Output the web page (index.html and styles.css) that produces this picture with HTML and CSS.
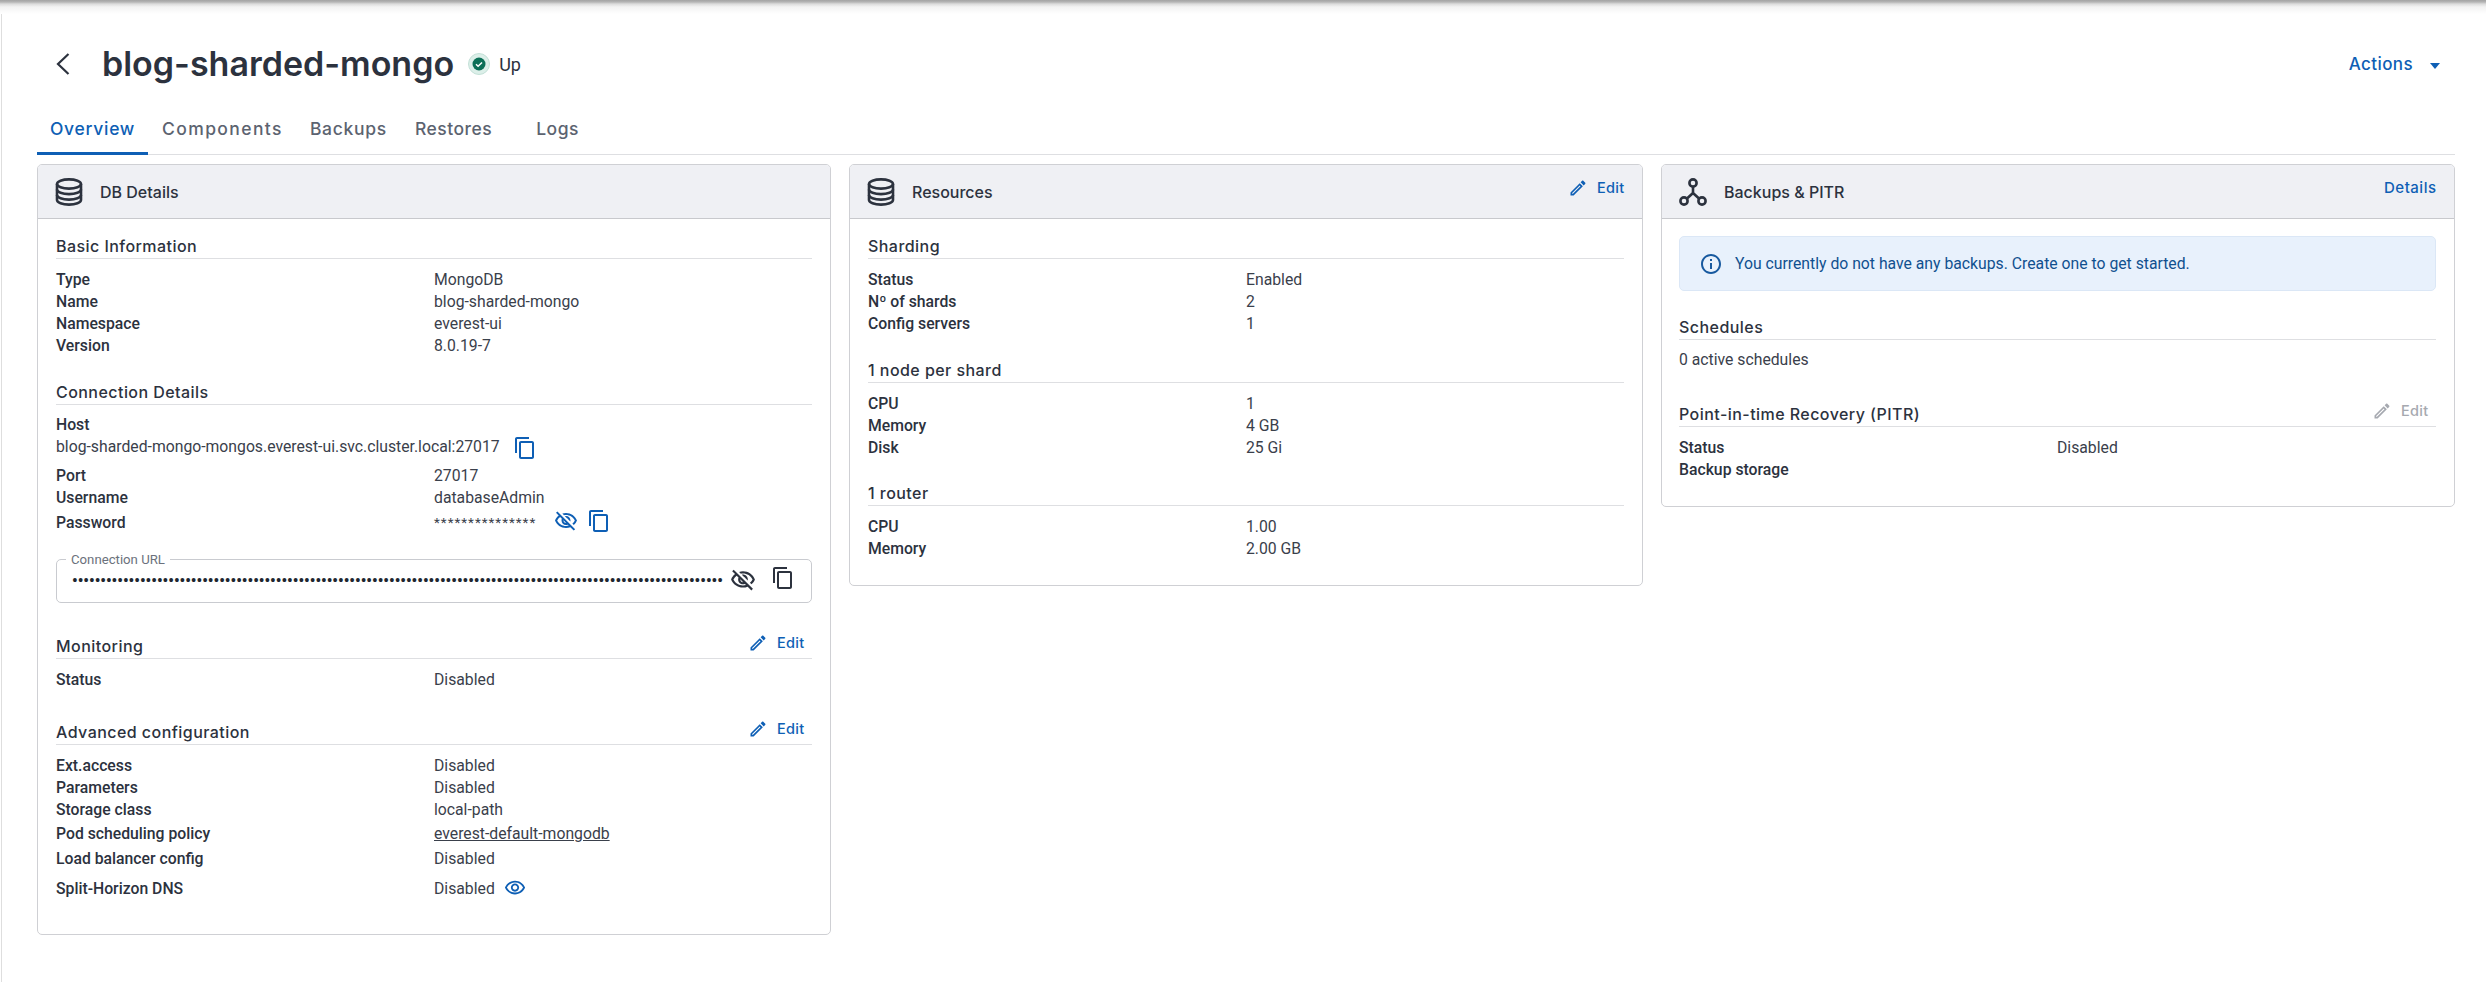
FILE: index.html
```html
<!DOCTYPE html>
<html lang="en">
<head>
<meta charset="utf-8">
<title>blog-sharded-mongo</title>
<link rel="stylesheet" href="styles.css">
</head>
<body>
<svg class="defs" width="0" height="0" aria-hidden="true">
  <symbol id="i-copy" viewBox="0 0 24 24"><path d="M16 1H4c-1.1 0-2 .9-2 2v14h2V3h12V1zm3 4H8c-1.1 0-2 .9-2 2v14c0 1.1.9 2 2 2h11c1.1 0 2-.9 2-2V7c0-1.1-.9-2-2-2zm0 16H8V7h11v14z"/></symbol>
  <symbol id="i-eyeoff" viewBox="0 0 24 24"><path d="M12 6c3.79 0 7.17 2.13 8.82 5.5-.59 1.22-1.42 2.27-2.41 3.12l1.41 1.41c1.39-1.23 2.49-2.77 3.18-4.53C21.27 7.11 17 4 12 4c-1.27 0-2.49.2-3.64.57l1.65 1.65C10.66 6.09 11.32 6 12 6zm-1.07 1.14L13 9.21c.57.25 1.03.71 1.28 1.28l2.07 2.07c.08-.34.14-.7.14-1.07C16.5 9.01 14.48 7 12 7c-.37 0-.72.05-1.07.14zM2.01 3.87l2.68 2.68C3.06 7.83 1.77 9.53 1 11.5 2.73 15.89 7 19 12 19c1.52 0 2.98-.29 4.32-.82l3.42 3.42 1.41-1.41L3.42 2.45 2.01 3.87zm7.5 7.5 2.61 2.61c-.04.01-.08.02-.12.02-1.38 0-2.5-1.12-2.5-2.5 0-.05.01-.08.01-.13zm-3.4-3.4 1.75 1.75c-.23.55-.36 1.15-.36 1.78 0 2.48 2.02 4.5 4.5 4.5.63 0 1.23-.13 1.77-.36l.98.98c-.88.24-1.8.38-2.75.38-3.79 0-7.17-2.13-8.82-5.5.7-1.43 1.72-2.61 2.93-3.53z"/></symbol>
  <symbol id="i-eye" viewBox="0 0 24 24"><path d="M12 6c3.79 0 7.17 2.13 8.82 5.5C19.17 14.87 15.79 17 12 17s-7.17-2.13-8.82-5.5C4.83 8.13 8.21 6 12 6m0-2C7 4 2.73 7.11 1 11.5 2.73 15.89 7 19 12 19s9.27-3.11 11-7.5C21.27 7.11 17 4 12 4zm0 5c1.38 0 2.5 1.12 2.5 2.5S13.38 14 12 14s-2.5-1.12-2.5-2.5S10.62 9 12 9m0-2c-2.48 0-4.5 2.02-4.5 4.5S9.52 16 12 16s4.5-2.02 4.5-4.5S14.48 7 12 7z"/></symbol>
  <symbol id="i-edit" viewBox="0 0 24 24"><path d="M3 17.25V21h3.75L17.81 9.94l-3.75-3.75L3 17.25zM5.92 19H5v-.92l9.06-9.06.92.92L5.92 19zM20.71 5.63l-2.34-2.34c-.2-.2-.45-.29-.71-.29s-.51.1-.7.29l-1.83 1.83 3.75 3.75 1.83-1.83c.39-.39.39-1.02 0-1.41z"/></symbol>
  <symbol id="i-db" viewBox="0 0 28 28"><g fill="none" stroke="currentColor" stroke-width="2.6"><ellipse cx="14" cy="6" rx="12" ry="4.6"/><path d="M2 6v16c0 2.6 5.4 4.6 12 4.6s12-2 12-4.6V6"/><path d="M2 11.5c0 2.6 5.4 4.6 12 4.6s12-2 12-4.6"/><path d="M2 17c0 2.6 5.4 4.6 12 4.6s12-2 12-4.6"/></g></symbol>
</svg>
<div class="topshade"></div>
<main class="page">
  <header class="header">
    <svg class="back" viewBox="0 0 14 22" aria-hidden="true"><path d="M12.5 1 2 11l10.5 10" fill="none" stroke="currentColor" stroke-width="2.2"/></svg>
    <h1 class="title">blog-sharded-mongo</h1>
    <span class="status">
      <svg class="status-icon" viewBox="0 0 22 22" aria-hidden="true"><circle cx="11" cy="11" r="10.5" fill="#dcefe9" stroke="#c3e0d7"/><circle cx="11" cy="11" r="6.5" fill="#0b6f57"/><path d="m8 11.2 2.1 2.1L14 9.5" fill="none" stroke="#fff" stroke-width="1.5"/></svg>
      <span class="status-text">Up</span>
    </span>
    <span class="actions">Actions<svg class="caret" viewBox="0 0 10 6" aria-hidden="true"><path d="M0 0h10L5 6z" fill="currentColor"/></svg></span>
  </header>
  <nav class="tabs">
    <a class="tab tab-active">Overview</a>
    <a class="tab tab-components">Components</a>
    <a class="tab tab-backups">Backups</a>
    <a class="tab tab-wide">Restores</a>
    <a class="tab">Logs</a>
  </nav>
  <div class="cards">
    <section class="card">
      <div class="card-head">
        <div class="card-title"><svg class="head-icon"><use href="#i-db"/></svg><span>DB Details</span></div>
      </div>
      <div class="card-body">
        <div class="section">
          <h3 class="section-title">Basic Information</h3>
          <dl class="rows">
            <dt>Type</dt><dd>MongoDB</dd>
            <dt>Name</dt><dd>blog-sharded-mongo</dd>
            <dt>Namespace</dt><dd>everest-ui</dd>
            <dt>Version</dt><dd>8.0.19-7</dd>
          </dl>
        </div>
        <div class="section">
          <h3 class="section-title">Connection Details</h3>
          <div class="host">
            <div class="host-label">Host</div>
            <div class="host-value"><span>blog-sharded-mongo-mongos.everest-ui.svc.cluster.local:27017</span><svg class="ico ico-blue host-copy"><use href="#i-copy"/></svg></div>
          </div>
          <dl class="rows">
            <dt>Port</dt><dd>27017</dd>
            <dt>Username</dt><dd>databaseAdmin</dd>
            <dt class="tall">Password</dt>
            <dd class="tall"><span class="stars">***************</span><svg class="ico ico-blue eye-off"><use href="#i-eyeoff"/></svg><svg class="ico ico-blue pw-copy"><use href="#i-copy"/></svg></dd>
          </dl>
          <div class="url-field">
            <span class="url-label">Connection URL</span>
            <span class="url-dots">•••••••••••••••••••••••••••••••••••••••••••••••••••••••••••••••••••••••••••••••••••••••••••••••••••••••••••••••••••</span>
            <svg class="ico ico-dark url-eye"><use href="#i-eyeoff"/></svg>
            <svg class="ico ico-dark url-copy"><use href="#i-copy"/></svg>
          </div>
        </div>
        <div class="section section-wide">
          <h3 class="section-title">Monitoring<span class="edit"><svg class="edit-icon"><use href="#i-edit"/></svg>Edit</span></h3>
          <dl class="rows">
            <dt>Status</dt><dd>Disabled</dd>
          </dl>
        </div>
        <div class="section section-wide section-last">
          <h3 class="section-title">Advanced configuration<span class="edit"><svg class="edit-icon"><use href="#i-edit"/></svg>Edit</span></h3>
          <dl class="rows">
            <dt>Ext.access</dt><dd>Disabled</dd>
            <dt>Parameters</dt><dd>Disabled</dd>
            <dt>Storage class</dt><dd>local-path</dd>
            <dt class="r26">Pod scheduling policy</dt><dd class="r26"><a class="link">everest-default-mongodb</a></dd>
            <dt class="r24">Load balancer config</dt><dd class="r24">Disabled</dd>
            <dt class="r36">Split-Horizon DNS</dt><dd class="r36">Disabled<svg class="ico ico-blue eye-on"><use href="#i-eye"/></svg></dd>
          </dl>
        </div>
      </div>
    </section>

    <section class="card">
      <div class="card-head">
        <div class="card-title"><svg class="head-icon"><use href="#i-db"/></svg><span>Resources</span></div>
        <span class="edit edit-head"><svg class="edit-icon"><use href="#i-edit"/></svg>Edit</span>
      </div>
      <div class="card-body">
        <div class="section">
          <h3 class="section-title">Sharding</h3>
          <dl class="rows">
            <dt>Status</dt><dd>Enabled</dd>
            <dt>Nº of shards</dt><dd>2</dd>
            <dt>Config servers</dt><dd>1</dd>
          </dl>
        </div>
        <div class="section">
          <h3 class="section-title">1 node per shard</h3>
          <dl class="rows">
            <dt>CPU</dt><dd>1</dd>
            <dt>Memory</dt><dd>4 GB</dd>
            <dt>Disk</dt><dd>25 Gi</dd>
          </dl>
        </div>
        <div class="section section-tight">
          <h3 class="section-title">1 router</h3>
          <dl class="rows">
            <dt>CPU</dt><dd>1.00</dd>
            <dt>Memory</dt><dd>2.00 GB</dd>
          </dl>
        </div>
      </div>
    </section>

    <section class="card">
      <div class="card-head">
        <div class="card-title">
          <svg class="head-icon" viewBox="0 0 28 28" aria-hidden="true"><g fill="none" stroke="currentColor" stroke-width="2.6"><circle cx="14" cy="5" r="3.6"/><circle cx="5" cy="23" r="3.6"/><circle cx="23" cy="23" r="3.6"/><path d="M14 8.6V15M14 15 8 20.5M14 15l6 5.5"/></g></svg>
          <span>Backups &amp; PITR</span>
        </div>
        <span class="edit edit-head edit-details">Details</span>
      </div>
      <div class="card-body card-body-alert">
        <div class="alert">
          <svg class="alert-icon" viewBox="0 0 24 24" aria-hidden="true"><path d="M11 7h2v2h-2zm0 4h2v6h-2zm1-9C6.48 2 2 6.48 2 12s4.48 10 10 10 10-4.48 10-10S17.52 2 12 2zm0 18c-4.41 0-8-3.59-8-8s3.59-8 8-8 8 3.59 8 8-3.59 8-8 8z"/></svg>
          <span>You currently do not have any backups. Create one to get started.</span>
        </div>
        <div class="section">
          <h3 class="section-title">Schedules</h3>
          <p class="plain">0 active schedules</p>
        </div>
        <div class="section section-pitr">
          <h3 class="section-title">Point-in-time Recovery (PITR)<span class="edit edit-off"><svg class="edit-icon"><use href="#i-edit"/></svg>Edit</span></h3>
          <dl class="rows">
            <dt>Status</dt><dd>Disabled</dd>
            <dt>Backup storage</dt><dd></dd>
          </dl>
        </div>
      </div>
    </section>
  </div>
</main>
</body>
</html>
```

FILE: styles.css
```css
* { box-sizing: border-box; }
html, body { margin: 0; padding: 0; }
body {
  width: 2486px;
  height: 982px;
  overflow: hidden;
  background: #fff;
  color: #2c323e;
  font-family: Roboto, "Liberation Sans", sans-serif;
  font-size: 15.75px;
}
.defs { display: block; height: 0; }
.topshade {
  height: 14px;
  background: linear-gradient(#a3a3a3 0, #b5b5b5 2px, #dcdcdc 4px, #f3f3f3 7px, #fff 14px);
}
.page {
  margin-left: 1px;
  height: 968px;
  border-left: 1px solid #dedede;
  padding: 26px 31px 0 35px;
}
.header {
  display: flex;
  align-items: center;
  width: 2418px;
  height: 48px;
  padding: 0 15px 0 19px;
}
.back { width: 14px; height: 22px; color: #2c323e; margin-right: 32px; flex: none; }
.title {
  margin: 0;
  font-family: Inter, sans-serif;
  font-weight: 600;
  font-size: 34px;
  line-height: 48px;
  color: #2c323e;
}
.status { display: flex; align-items: center; margin-left: 14px; }
.status-icon { width: 22px; height: 22px; margin-right: 9px; }
.status-text { font-size: 18px; }
.actions {
  display: flex;
  align-items: center;
  margin-left: auto;
  font-family: Inter, sans-serif;
  font-weight: 500;
  font-size: 17px;
  letter-spacing: .4px;
  color: #0e5fb5;
}
.caret { width: 10px; height: 6px; margin-left: 17px; margin-top: 3px; }
.tabs {
  display: flex;
  width: 2418px;
  height: 55px;
  margin-top: 12px;
  border-bottom: 1px solid #dedfe2;
  align-items: stretch;
}
.tab {
  padding: 0 14px;
  line-height: 57px;
  font-family: Inter, sans-serif;
  font-weight: 500;
  font-size: 17.5px;
  letter-spacing: .5px;
  color: #5c6370;
  margin-bottom: -1px;
}
.tab-active { padding: 0 13px; width: 111px; letter-spacing: .7px; color: #0e5fb5; border-bottom: 3px solid #0e5fb5; }
.tab-components { letter-spacing: 1.4px; }
.tab-backups { padding: 0 14px 0 13px; letter-spacing: .7px; }
.tab-wide { margin-right: 16px; }
.cards {
  display: grid;
  grid-template-columns: repeat(3, 793.5px);
  column-gap: 18.5px;
  align-items: start;
  margin-top: 9px;
}
.card {
  border: 1px solid #cfd0d4;
  border-radius: 5px;
  overflow: hidden;
  background: #fff;
}
.card-head {
  display: flex;
  justify-content: space-between;
  height: 54px;
  padding: 0 17px;
  background: #eff0f4;
  border-bottom: 1px solid #c8c9cd;
}
.card-title {
  display: flex;
  align-items: center;
  font-family: Inter, sans-serif;
  font-weight: 500;
  font-size: 16px;
  color: #2c323e;
}
.head-icon { width: 28px; height: 28px; margin-right: 17px; color: #2c323e; flex: none; }
.card-body { padding: 15px 18px 26px; }
.card-body-alert { padding-top: 17px; padding-left: 17px; }
.section + .section { margin-top: 24px; }
.section.section-wide { margin-top: 30px; }
.section.section-pitr { margin-top: 31px; }
.section.section-tight { margin-top: 23px; }
.section-last { margin-bottom: 2px; }
.section-title {
  display: flex;
  justify-content: space-between;
  align-items: flex-start;
  height: 24px;
  margin: 0 0 9px;
  font-family: Inter, sans-serif;
  font-weight: 500;
  font-size: 16px;
  letter-spacing: .45px;
  line-height: 24px;
  color: #2c323e;
  border-bottom: 1px solid #dedfe2;
  box-sizing: content-box;
}
.rows {
  display: grid;
  grid-template-columns: 378px 1fr;
  margin: 0;
}
.rows dt, .rows dd {
  display: flex;
  align-items: center;
  height: 22px;
  margin: 0;
}
.rows dt { font-weight: 500; color: #2c323e; }
.rows dd { color: #3a404b; }
.rows .tall { height: 28px; }
.rows .r26 { height: 26px; }
.rows .r24 { height: 24px; }
.rows .r36 { height: 36px; }
.link { color: #3a404b; text-decoration: underline; }
.host-label { height: 22px; line-height: 22px; font-weight: 500; }
.host-value { display: flex; align-items: flex-start; height: 28px; line-height: 22px; color: #3a404b; }
.ico { flex: none; fill: currentColor; }
.ico-blue { color: #0e5fb5; }
.ico-dark { color: #2c323e; }
.host-copy { width: 24px; height: 24px; margin-left: 13px; }
.stars { font-size: 13.5px; letter-spacing: 1px; }
.eye-off { width: 24px; height: 24px; margin-left: 18px; margin-bottom: 3px; }
.pw-copy { width: 24px; height: 24px; margin-left: 9px; margin-bottom: 3px; }
.eye-on { width: 22px; height: 22px; margin-left: 9px; }
.url-field {
  position: relative;
  display: flex;
  align-items: center;
  height: 44px;
  margin-top: 23px;
  margin-bottom: 31px;
  padding: 0 18px 2px 15px;
  border: 1px solid #c9cbd0;
  border-radius: 5px;
}
.url-label {
  position: absolute;
  left: 9px;
  top: -8px;
  padding: 0 5px;
  background: #fff;
  font-size: 13.2px;
  line-height: 15px;
  color: #6b717c;
}
.url-dots {
  width: 649px;
  white-space: nowrap;
  font-weight: 700;
  color: #20252f;
  flex: none;
}
.url-eye { width: 26px; height: 26px; margin-left: 9px; }
.url-copy { width: 24px; height: 24px; margin-left: 15px; margin-bottom: 4px; }
.edit {
  display: flex;
  align-items: center;
  font-family: Inter, sans-serif;
  font-weight: 500;
  font-size: 14.5px;
  letter-spacing: .3px;
  line-height: 20px;
  color: #0e5fb5;
  padding-right: 7px;
  margin-top: -1px;
}
.edit-head { margin-top: 13px; height: 20px; padding-right: 0; }
.edit-details { font-size: 15px; letter-spacing: .5px; }
.edit-off { color: #a6a9b0; }
.edit-icon { width: 20px; height: 20px; margin-right: 9px; fill: currentColor; }
.alert {
  display: flex;
  align-items: center;
  height: 55px;
  margin-bottom: 24px;
  padding: 0 19px;
  background: #e8f1fc;
  border: 1px solid #dbe7f6;
  border-radius: 5px;
  color: #10508f;
}
.alert-icon { width: 24px; height: 24px; margin-right: 12px; fill: #17599f; flex: none; }
.plain { margin: 0; height: 22px; line-height: 22px; color: #3a404b; }
```
